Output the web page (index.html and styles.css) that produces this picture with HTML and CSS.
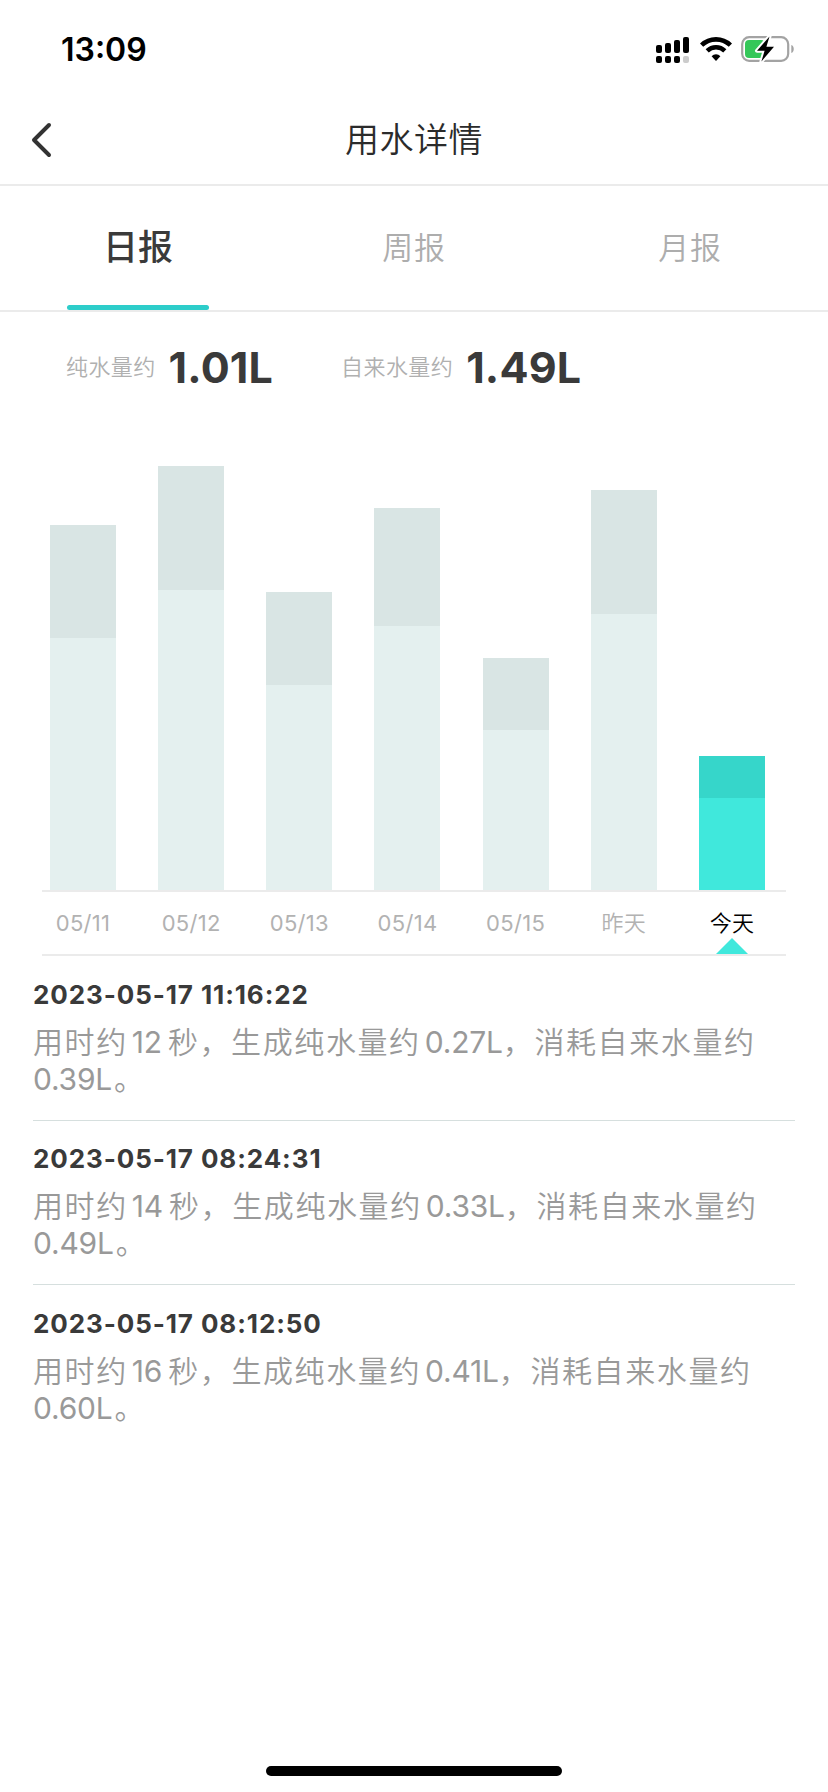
FILE: index.html
```html
<!DOCTYPE html>
<html lang="zh-CN">
<head>
  <meta charset="UTF-8">
  <title>用水详情</title>
  <link rel="stylesheet" href="styles.css">
</head>
<body>

<div class="status-bar">
  <span class="time">13:09</span>
  <div class="status-icons">
    <svg class="signal" width="34" height="26" viewBox="0 0 34 26">
      <rect x="0" y="8" width="6" height="8" rx="2"/>
      <rect x="9" y="6" width="6" height="10" rx="2"/>
      <rect x="18" y="3" width="6" height="13" rx="2"/>
      <rect x="27" y="0" width="6" height="16" rx="2"/>
      <rect x="0" y="19" width="6" height="7" rx="2"/>
      <rect x="9" y="19" width="6" height="7" rx="2"/>
      <rect x="18" y="19" width="6" height="7" rx="2"/>
      <rect x="27" y="19" width="6" height="7" rx="2" fill="#ccc"/>
    </svg>
    <svg class="wifi" width="32" height="24" viewBox="0 0 32 24">
      <path d="M1.6 8.2 A20.6 20.6 0 0 1 30.4 8.2" fill="none" stroke="#000" stroke-width="4.6"/>
      <path d="M7.2 13.9 A12.4 12.4 0 0 1 24.8 13.9" fill="none" stroke="#000" stroke-width="4.4"/>
      <path d="M11.6 19.2 A6.2 6.2 0 0 1 20.4 19.2 L16 24 Z"/>
    </svg>
    <svg class="battery" width="54" height="28" viewBox="0 0 54 28">
      <rect x="1.2" y="2.2" width="46" height="23.6" rx="7" fill="#fff" stroke="#a3a3a3" stroke-width="2.2"/>
      <rect x="4" y="5" width="20" height="18" rx="4" fill="#34c759"/>
      <path d="M50.3 10 C53.6 11 53.6 17 50.3 18 Z" fill="#a3a3a3"/>
      <path d="M28.5 1.5 L16 15.8 H23.6 L20.4 26.5 L33 11.8 H25.4 Z" stroke="#fff" stroke-width="4" stroke-linejoin="round"/>
      <path d="M28.5 1.5 L16 15.8 H23.6 L20.4 26.5 L33 11.8 H25.4 Z"/>
    </svg>
  </div>
</div>

<div class="nav">
  <svg class="back" width="22" height="36" viewBox="0 0 22 36">
    <path d="M18 3 L3 18 L18 33" fill="none" stroke="#333" stroke-width="4" stroke-linecap="round" stroke-linejoin="round"/>
  </svg>
  <div class="nav-title">用水详情</div>
</div>

<div class="tabs">
  <div class="tab active"><span>日报</span></div>
  <div class="tab"><span>周报</span></div>
  <div class="tab"><span>月报</span></div>
</div>

<div class="summary">
  <div class="summary-item">
    <span class="summary-label">纯水量约</span>
    <span class="summary-value">1.01L</span>
  </div>
  <div class="summary-item">
    <span class="summary-label">自来水量约</span>
    <span class="summary-value">1.49L</span>
  </div>
</div>

<div class="chart">
  <div class="bars">
    <div class="bar" style="height: 365px"><div class="bar-pure" style="height: 252px"></div></div>
    <div class="bar" style="height: 424px"><div class="bar-pure" style="height: 300px"></div></div>
    <div class="bar" style="height: 298px"><div class="bar-pure" style="height: 205px"></div></div>
    <div class="bar" style="height: 382px"><div class="bar-pure" style="height: 264px"></div></div>
    <div class="bar" style="height: 232px"><div class="bar-pure" style="height: 160px"></div></div>
    <div class="bar" style="height: 400px"><div class="bar-pure" style="height: 276px"></div></div>
    <div class="bar today" style="height: 134px"><div class="bar-pure" style="height: 92px"></div></div>
  </div>
  <div class="days">
    <div class="day">05/11</div>
    <div class="day">05/12</div>
    <div class="day">05/13</div>
    <div class="day">05/14</div>
    <div class="day">05/15</div>
    <div class="day recent">昨天</div>
    <div class="day recent today">今天</div>
  </div>
</div>

<div class="records">
  <div class="record">
    <div class="record-time">2023-05-17 11:16:22</div>
    <div class="record-text">用时约<span class="num seconds">12</span>秒，生成纯水量约<span class="num pure">0.27L</span>，消耗自来水量约<span class="num tap">0.39L</span>。</div>
  </div>
  <div class="record">
    <div class="record-time">2023-05-17 08:24:31</div>
    <div class="record-text">用时约<span class="num seconds">14</span>秒，生成纯水量约<span class="num pure">0.33L</span>，消耗自来水量约<span class="num tap">0.49L</span>。</div>
  </div>
  <div class="record">
    <div class="record-time">2023-05-17 08:12:50</div>
    <div class="record-text">用时约<span class="num seconds">16</span>秒，生成纯水量约<span class="num pure">0.41L</span>，消耗自来水量约<span class="num tap">0.60L</span>。</div>
  </div>
</div>

<div class="home-indicator"></div>

</body>
</html>
```
FILE: styles.css
```css
* {
  box-sizing: border-box;
}

body {
  margin: 0;
  width: 828px;
  height: 1792px;
  display: flex;
  flex-direction: column;
  background-color: #fff;
  color: #3a3a3a;
  font-family: Inter, "Noto Sans CJK SC", sans-serif;
}

/* status bar */
.status-bar {
  display: flex;
  justify-content: space-between;
  height: 96px;
  padding: 0 33px 0 61px;
}

.time {
  color: #000;
  font-size: 32px;
  font-weight: 600;
  line-height: 100px;
}

.status-icons {
  display: flex;
  align-items: flex-start;
  padding-top: 37px;
}

.wifi {
  margin-left: 10px;
}

.battery {
  margin: -2px 0 0 9px;
}

/* header */
.nav {
  display: grid;
  grid-template-columns: 60px 1fr 60px;
  align-items: center;
  height: 90px;
  border-bottom: 2px solid #ebebeb;
}

.back {
  margin-left: 31px;
}

.nav-title {
  color: #2b2b2b;
  font-size: 34px;
  font-weight: 350;
  letter-spacing: 0.5px;
  line-height: 88px;
  text-align: center;
}

/* tabs */
.tabs {
  display: grid;
  grid-template-columns: repeat(3, 1fr);
  height: 126px;
  border-bottom: 2px solid #ebebeb;
}

.tab {
  display: flex;
  justify-content: center;
  color: #adadad;
  font-size: 31px;
  font-weight: 350;
  letter-spacing: 0.8px;
  line-height: 124px;
}

.tab span {
  width: 142px;
  text-align: center;
}

.tab.active {
  color: #3a3a3a;
  font-size: 35px;
  font-weight: 500;
  letter-spacing: 0;
  line-height: 123px;
}

.tab.active span::after {
  content: "";
  display: block;
  height: 5px;
  margin-top: -4px;
  border-radius: 3px;
  background-color: #2dcdca;
}

/* totals */
.summary {
  display: flex;
  gap: 68px;
  height: 110px;
  margin-bottom: 2px;
  padding-left: 66px;
  align-items: center;
}

.summary-item {
  display: flex;
  align-items: center;
  gap: 13px;
}

.summary-label {
  margin-top: -5px;
  color: #b0b0b0;
  font-size: 22px;
  font-weight: 350;
  letter-spacing: 0.4px;
}

.summary-value {
  font-size: 43px;
  font-weight: 700;
  letter-spacing: 0.2px;
}

/* chart */
.chart {
  width: 744px;
  margin-left: 42px;
}

.bars {
  display: flex;
  align-items: flex-end;
  justify-content: space-between;
  height: 468px;
  padding: 0 21px 0 8px;
  border-bottom: 2px solid #ebebeb;
}

.bar {
  display: flex;
  align-items: flex-end;
  width: 66px;
  background-color: #d9e5e4;
}

.bar-pure {
  width: 100%;
  background-color: #e4f0ef;
}

.bar.today {
  background-color: #36d6ca;
}

.bar.today .bar-pure {
  background-color: #40e8dc;
}

.days {
  display: flex;
  justify-content: space-between;
  height: 64px;
  padding: 0 21px 0 8px;
  border-bottom: 2px solid #ebebeb;
}

.day {
  position: relative;
  width: 66px;
  color: #b2b2b2;
  font-size: 22px;
  letter-spacing: 0.3px;
  line-height: 63px;
  text-align: center;
  white-space: nowrap;
}

.day.recent {
  font-weight: 350;
  line-height: 62px;
}

.day.today {
  color: #000;
}

.day.today::after {
  content: "";
  position: absolute;
  left: 17px;
  bottom: 0;
  border: 16px solid transparent;
  border-top: 0;
  border-bottom-color: #40e8dc;
}

/* records */
.records {
  margin: 1px 33px 0;
}

.record {
  height: 164px;
  padding-top: 21px;
  border-bottom: 1px solid #d6dfde;
}

.record:last-child {
  padding-top: 22px;
  border-bottom: 0;
}

.record-time {
  font-size: 26px;
  font-weight: 650;
  line-height: 34px;
  letter-spacing: 0.9px;
}

.record-text {
  margin-top: 12px;
  color: #999;
  font-size: 30px;
  font-weight: 350;
  line-height: 37px;
  letter-spacing: 1.6px;
}

.num {
  font-weight: 400;
  letter-spacing: -0.2px;
}

.num.seconds {
  margin: 0 6px 0 4px;
}

.num.pure {
  margin-left: 4px;
}

.num.tap {
  margin-right: 2px;
}

.home-indicator {
  width: 296px;
  height: 10px;
  margin: auto auto 16px;
  border-radius: 5px;
  background-color: #000;
}
```
